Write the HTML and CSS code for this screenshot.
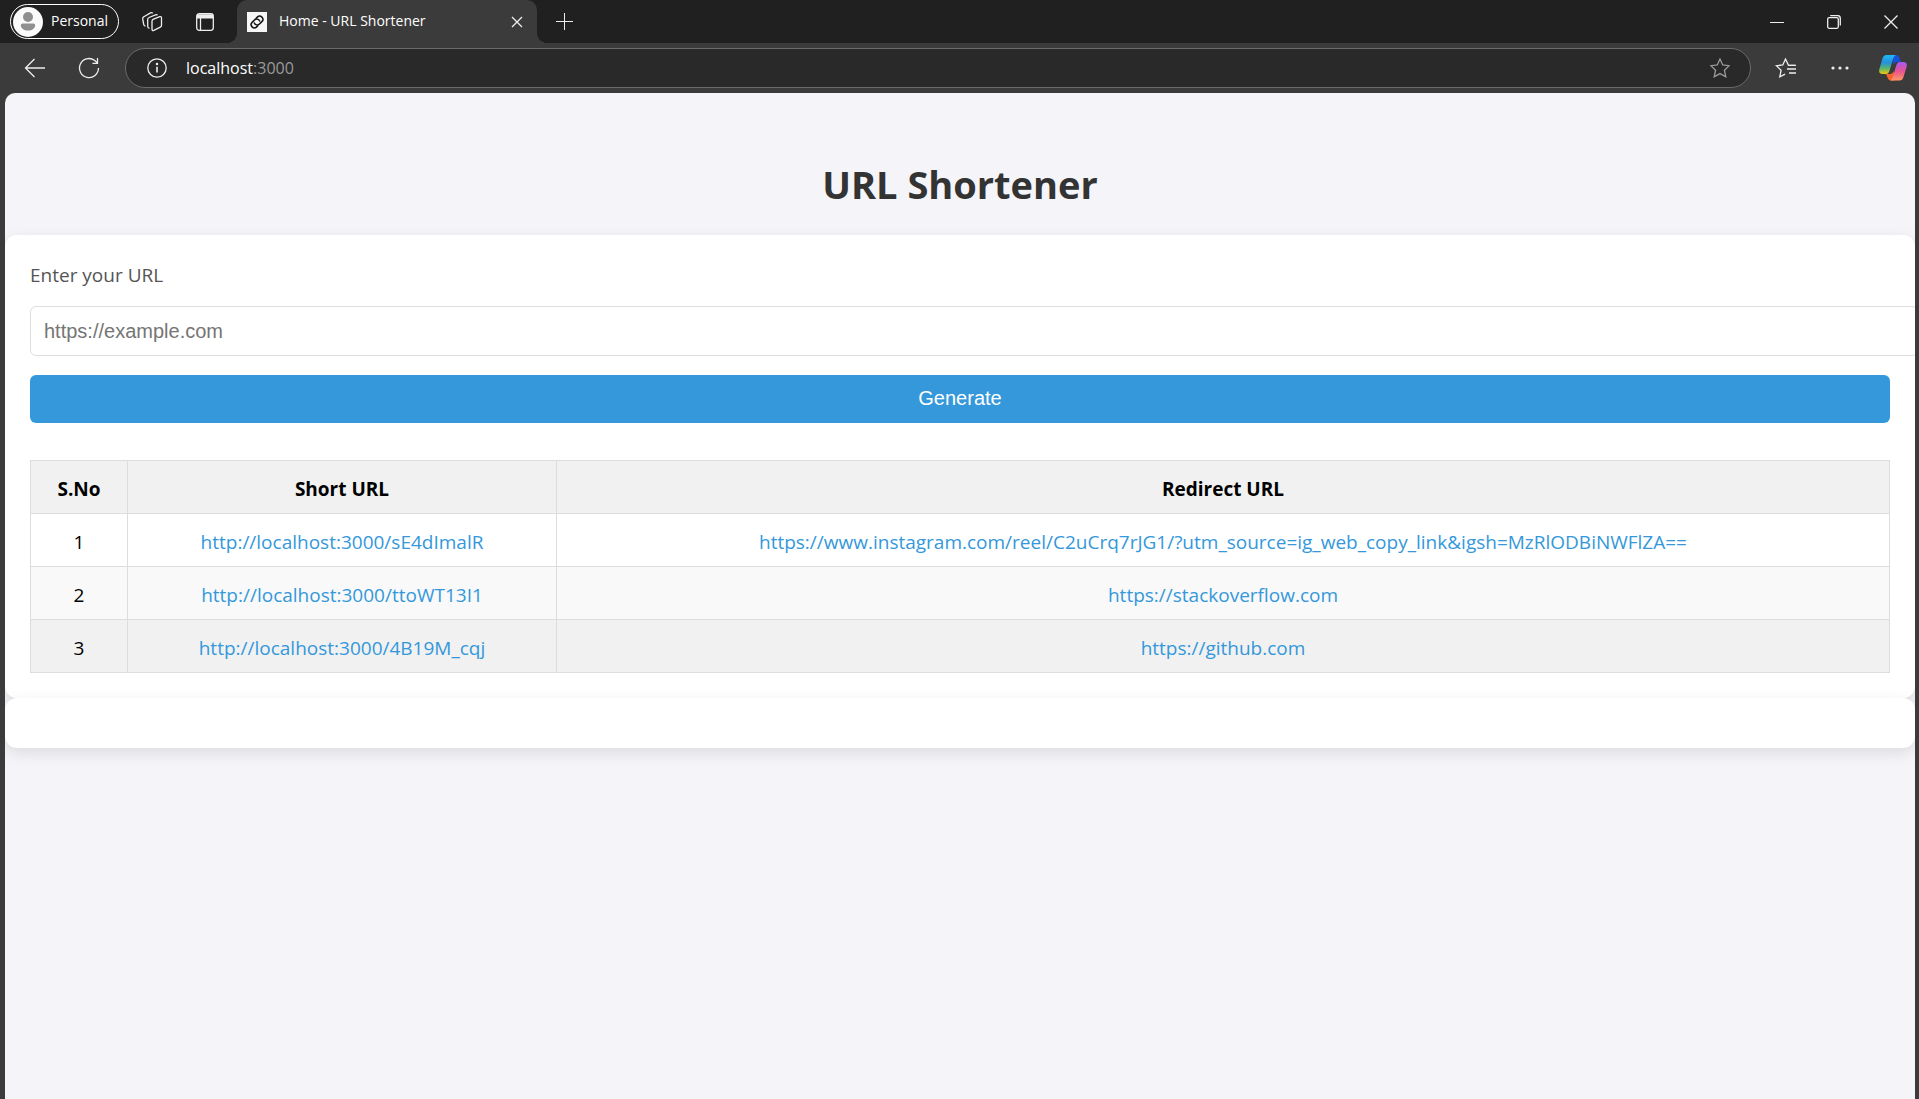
FILE: index.html
```html
<!DOCTYPE html>
<html lang="en">
<head>
<meta charset="utf-8">
<title>Home - URL Shortener</title>
<link rel="stylesheet" href="styles.css">
</head>
<body>
<div class="browser">
  <header class="tabbar">
    <button class="profile" type="button">
      <svg class="avatar" viewBox="0 0 30 30" aria-hidden="true"><circle cx="15" cy="15" r="15" fill="#fafafa"/><circle cx="15" cy="10" r="5" fill="#8f8f8f"/><path d="M9.500 16.500h11a1.700 1.700 0 0 1 1.700 1.700c0 3-3 5.300-7.200 5.300s-7.200-2.300-7.200-5.300a1.700 1.700 0 0 1 1.700-1.700z" fill="#8f8f8f"/></svg>
      <span>Personal</span>
    </button>
    <button class="icon-btn" type="button" aria-label="Workspaces">
      <svg width="22" height="22" viewBox="0 0 22 22" class="line"><path d="M12 8.300l6.700-2.600q1.800-.5 1.800 1.300v7.300q0 1.300-1.200 1.900l-6.500 3.200q-1.800.6-1.800-1.200v-7.800q0-1.600 1-2.100z"/><path d="M8.500 17.300q-1.800-.2-1.800-2V8.500q0-1.500 1.300-2l6.500-2.700q1.300-.4 2 .4"/><path d="M4.500 15.200q-1.500-.2-1.800-1.800l-1-5.500q-.2-1.500 1.200-2.200l6.600-3.800q1.300-.5 2.300.2"/></svg>
    </button>
    <button class="icon-btn" type="button" aria-label="Tab actions">
      <svg width="20" height="20" viewBox="0 0 20 20" class="line"><rect x="1.700" y="1.700" width="16.600" height="16.600" rx="2.500"/><path d="M2 3.500h16M2 5.200h16" stroke-width="2.500"/><path d="M5.500 6v12"/></svg>
    </button>
    <div class="tab">
      <svg class="favicon" viewBox="0 0 20 20" aria-hidden="true"><path fill="#f7f7f7" d="M0 0h20v20H0z"/><g fill="none" stroke="#111" stroke-width="1.500" stroke-linecap="round" transform="rotate(-45 10 10)"><path d="M8 13.200H6.300a3.200 3.200 0 0 1 0-6.400h3.400a3.200 3.200 0 0 1 2.900 4.400"/><path d="M12 6.800h1.700a3.200 3.200 0 0 1 0 6.400h-3.400a3.200 3.200 0 0 1-2.900-4.400"/></g></svg>
      <span class="tab-title">Home - URL Shortener</span>
      <button class="tab-close" type="button" aria-label="Close tab"><svg width="12" height="12" viewBox="0 0 12 12" class="line"><path d="M1 1l10 10M11 1L1 11"/></svg></button>
    </div>
    <button class="icon-btn new-tab" type="button" aria-label="New tab"><svg width="18" height="18" viewBox="0 0 18 18" class="line thin"><path d="M9.500 0v17M1 8.500h17"/></svg></button>
    <div class="window-controls">
      <button type="button" aria-label="Minimize"><svg width="14" height="14" viewBox="0 0 14 14" class="line thin"><path d="M0 7.500h14"/></svg></button>
      <button type="button" aria-label="Restore"><svg width="14" height="14" viewBox="0 0 14 14" class="line"><rect x=".7" y="2.700" width="10.600" height="10.600" rx="1.500"/><path d="M3.200.6h7.300q2.800 0 2.800 2.800v7.100"/></svg></button>
      <button type="button" aria-label="Close"><svg width="14" height="14" viewBox="0 0 14 14" class="line"><path d="M.5.500l13 13M13.500.5l-13 13"/></svg></button>
    </div>
  </header>
  <nav class="toolbar">
    <button class="icon-btn" type="button" aria-label="Back"><svg width="22" height="22" viewBox="0 0 22 22" class="line"><path d="M21 11H2M10.500 2L1.500 11l9 9"/></svg></button>
    <button class="icon-btn" type="button" aria-label="Reload"><svg width="22" height="22" viewBox="0 0 22 22" class="line"><path d="M20.500 11a9.500 9.500 0 1 1-4-7.700l2.800 2.500M19.500 1v5.300h-5"/></svg></button>
    <div class="address">
      <svg width="20" height="20" viewBox="0 0 20 20" class="line"><circle cx="10" cy="10" r="9.200"/><path d="M10 8.800v5.700" stroke-width="1.600"/><circle cx="10" cy="6" r=".6" fill="#eee"/></svg>
      <span class="host">localhost<span class="port">:3000</span></span>
      <button type="button" aria-label="Add to favorites"><svg width="20" height="20" viewBox="0 0 20 20" class="line dim"><path d="M10 1l2.700 6 6.500.7-4.800 4.500 1.400 6.600L10 15.600l-5.800 3.200 1.400-6.600L.8 7.700 7.300 7z"/></svg></button>
    </div>
    <button class="icon-btn" type="button" aria-label="Favorites"><svg width="22" height="20" viewBox="0 0 22 20" class="line"><path d="M20 7.300h-6.500L10.500 1 7.800 7 1.300 7.700l4.800 4.500-1.300 6.600 5.300-2.700"/><path d="M14 7.300h7M12 11h9M14 15h7"/></svg></button>
    <button class="icon-btn" type="button" aria-label="More"><svg width="18" height="4" viewBox="0 0 18 4" fill="#eee"><circle cx="2" cy="2" r="1.600"/><circle cx="9" cy="2" r="1.600"/><circle cx="16" cy="2" r="1.600"/></svg></button>
    <button class="icon-btn copilot" type="button" aria-label="Copilot">
      <svg width="28" height="26" viewBox="0 0 28 26">
        <defs>
          <linearGradient id="cool" x1="0" y1="0" x2="0" y2="1"><stop offset="0" stop-color="#20b8f5"/><stop offset=".4" stop-color="#2590dc"/><stop offset=".7" stop-color="#56b56f"/><stop offset="1" stop-color="#f2c80c"/></linearGradient>
          <linearGradient id="warm" x1="0" y1="0" x2="0" y2="1"><stop offset="0" stop-color="#a658f4"/><stop offset=".5" stop-color="#e9538f"/><stop offset="1" stop-color="#ff9865"/></linearGradient>
        </defs>
        <path fill="#1752d6" d="M13 0h4q2.600 0 3.500 3l1.200 4h-3.500q-2.500 0-3.500 3z"/>
        <path fill="#f4652d" d="M7 19h4q2.500 0 3.500-3l1.500 9.500h-4q-2.600 0-3.500-3z"/>
        <path fill="url(#cool)" d="M7.500 0H17q-2 .5-2.800 3.500l-3.600 12Q9.500 19 7 19H3.700Q-.9 19 .4 14L3.500 3.500Q4.500 0 7.500 0z"/>
        <path fill="url(#warm)" d="M20.500 25.500H11q2-.5 2.800-3.500l3.600-12q1-3 3.600-3h3.300q4.600 0 3.300 5l-3.100 10q-1 3.500-4 3.500z"/>
      </svg>
    </button>
  </nav>
  <main class="page">
    <h1>URL Shortener</h1>
    <section class="card">
      <form>
        <label for="url">Enter your URL</label>
        <input id="url" type="text" placeholder="https://example.com">
        <button type="submit">Generate</button>
      </form>
      <table>
        <thead>
          <tr><th class="col-no">S.No</th><th class="col-short">Short URL</th><th>Redirect URL</th></tr>
        </thead>
        <tbody>
          <tr><td>1</td><td><a href="#">http://localhost:3000/sE4dImalR</a></td><td><a href="#">https://www.instagram.com/reel/C2uCrq7rJG1/?utm_source=ig_web_copy_link&amp;igsh=MzRlODBiNWFlZA==</a></td></tr>
          <tr><td>2</td><td><a href="#">http://localhost:3000/ttoWT13I1</a></td><td><a href="#">https://stackoverflow.com</a></td></tr>
          <tr class="active"><td>3</td><td><a href="#">http://localhost:3000/4B19M_cqj</a></td><td><a href="#">https://github.com</a></td></tr>
        </tbody>
      </table>
    </section>
    <section class="card"></section>
  </main>
</div>
</body>
</html>
```
FILE: styles.css
```css
* { box-sizing: border-box; }

body {
  margin: 0;
  background: #3b3b3b;
  font-family: "Open Sans", "Noto Sans", sans-serif;
}

.browser {
  display: flex;
  flex-direction: column;
  min-height: 100vh;
}

.browser header button,
.browser nav button {
  display: flex;
  align-items: center;
  justify-content: center;
  flex: none;
  padding: 0;
  border: 0;
  background: none;
  color: #fff;
  font-family: inherit;
}

svg { display: block; flex: none; }
.line { fill: none; stroke: #eee; stroke-width: 1.3; }
.thin { stroke-width: 1; }
.dim { stroke: #9a9a9a; }

/* Tab strip */
.tabbar {
  display: flex;
  align-items: center;
  height: 43px;
  padding-left: 10px;
  background: #202020;
}

.tabbar .profile {
  gap: 8px;
  width: 109px;
  height: 35px;
  padding: 0 0 0 2px;
  justify-content: flex-start;
  border: 1px solid #fff;
  border-radius: 18px;
  font-size: 14px;
  line-height: 20px;
}

.avatar { width: 30px; height: 30px; }
.profile span { padding-bottom: 2px; }

.icon-btn { width: 53px; height: 40px; }
.profile + .icon-btn { margin-left: 6px; }

.tab {
  position: relative;
  display: flex;
  align-items: center;
  align-self: stretch;
  gap: 12px;
  width: 300px;
  margin-left: 6px;
  padding: 0 14px 0 10px;
  border-radius: 10px 10px 0 0;
  background: #3b3b3b;
}

.tab::before,
.tab::after {
  content: "";
  position: absolute;
  bottom: 0;
  width: 10px;
  height: 10px;
}

.tab::before {
  right: 100%;
  background: radial-gradient(circle at 0 0, transparent 10px, #3b3b3b 10px);
}

.tab::after {
  left: 100%;
  background: radial-gradient(circle at 100% 0, transparent 10px, #3b3b3b 10px);
}

.favicon { width: 20px; height: 20px; }

.tab-title {
  flex: 1;
  padding-bottom: 2px;
  color: #fff;
  font-size: 14px;
  line-height: 20px;
  white-space: nowrap;
}

.window-controls { display: flex; margin-left: auto; }
.window-controls button { width: 57px; height: 42px; }

/* Navigation bar */
.toolbar {
  display: flex;
  align-items: center;
  height: 50px;
  padding-left: 8px;
  background: #3b3b3b;
}

.toolbar .icon-btn { width: 54px; }
.toolbar .copilot { width: 52px; }

.address {
  display: flex;
  flex: 1;
  align-items: center;
  gap: 19px;
  height: 40px;
  margin: 0 8px 0 9px;
  padding: 0 20px 0 21px;
  border: 1px solid #6a6a6a;
  border-radius: 20px;
  background: #292929;
}

.host { flex: 1; color: #fff; font-size: 16px; line-height: 24px; }
.port { color: #9a9a9a; }

/* Page */
.page {
  flex: 1;
  margin: 0 4px 0 5px;
  padding-top: 61px;
  overflow: hidden;
  border-radius: 10px 10px 0 0;
  background: #f4f4f9;
}

h1 {
  margin: 0 0 21px;
  color: #333;
  font-size: 38px;
  line-height: 60px;
  text-align: center;
}

.card {
  padding: 25px;
  border-radius: 12px;
  background: #fff;
  box-shadow: 0 5px 15px rgba(0, 0, 0, 0.1);
}

.card label {
  display: block;
  margin-bottom: 16px;
  color: #555;
  font-size: 19px;
  line-height: 30px;
}

.card input {
  display: block;
  box-sizing: content-box;
  width: 100%;
  height: 22px;
  margin-bottom: 19px;
  padding: 13px;
  border: 1px solid #ddd;
  border-radius: 6px;
  font-family: "Liberation Sans", Arial, sans-serif;
  font-size: 20px;
}

.card input::placeholder { color: #757575; }

.card form button {
  display: block;
  width: 100%;
  height: 48px;
  margin-bottom: 37px;
  padding: 0 0 2px;
  border: 0;
  border-radius: 6px;
  background: #3498db;
  color: #fff;
  font-family: "Liberation Sans", Arial, sans-serif;
  font-size: 20px;
}

table {
  width: 100%;
  table-layout: fixed;
  border-collapse: collapse;
  font-size: 19px;
  line-height: 28px;
  text-align: center;
}

th, td {
  padding: 14px 12px 10px;
  border: 1px solid #ddd;
}

.col-no { width: 97px; }
.col-short { width: 429px; }

th { background: #f1f1f1; }
tbody tr:nth-child(even) { background: #f9f9f9; }
tbody .active { background: #f1f1f1; }

a { color: #3498db; text-decoration: none; }
```
